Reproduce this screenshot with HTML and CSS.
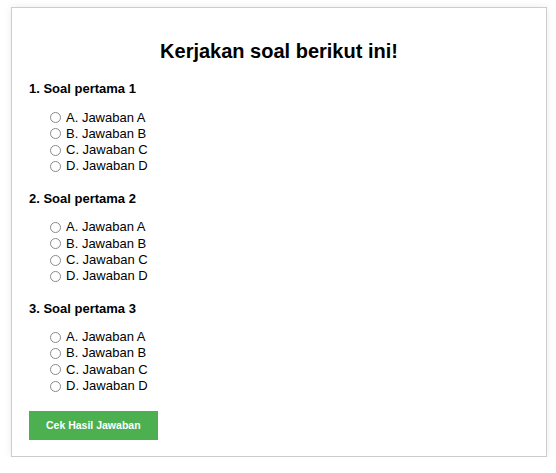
FILE: index.html
```html
<!DOCTYPE html>
<html lang="id">
<head>
<meta charset="utf-8">
<title>Kuis</title>
<link rel="stylesheet" href="styles.css">
</head>
<body>
<div class="quiz">
  <h1 class="quiz-title">Kerjakan soal berikut ini!</h1>
  <form class="quiz-form">
    <div class="question">
      <p class="question-title">1. Soal pertama 1</p>
      <div class="options">
        <label class="option"><input type="radio" name="q1" class="radio">A. Jawaban A</label>
        <label class="option"><input type="radio" name="q1" class="radio">B. Jawaban B</label>
        <label class="option"><input type="radio" name="q1" class="radio">C. Jawaban C</label>
        <label class="option"><input type="radio" name="q1" class="radio">D. Jawaban D</label>
      </div>
    </div>
    <div class="question">
      <p class="question-title">2. Soal pertama 2</p>
      <div class="options">
        <label class="option"><input type="radio" name="q2" class="radio">A. Jawaban A</label>
        <label class="option"><input type="radio" name="q2" class="radio">B. Jawaban B</label>
        <label class="option"><input type="radio" name="q2" class="radio">C. Jawaban C</label>
        <label class="option"><input type="radio" name="q2" class="radio">D. Jawaban D</label>
      </div>
    </div>
    <div class="question">
      <p class="question-title">3. Soal pertama 3</p>
      <div class="options">
        <label class="option"><input type="radio" name="q3" class="radio">A. Jawaban A</label>
        <label class="option"><input type="radio" name="q3" class="radio">B. Jawaban B</label>
        <label class="option"><input type="radio" name="q3" class="radio">C. Jawaban C</label>
        <label class="option"><input type="radio" name="q3" class="radio">D. Jawaban D</label>
      </div>
    </div>
    <button type="button" class="submit-btn">Cek Hasil Jawaban</button>
  </form>
</div>
</body>
</html>
```

FILE: styles.css
```css
html, body {
  margin: 0;
  background: #ffffff;
}

body {
  padding: 7px 9px 0 11px;
  font-family: "Liberation Sans", Arial, sans-serif;
  color: #000;
}

.quiz {
  background: #fff;
  border: 1px solid #cccccc;
  box-shadow: 0 0 8px rgba(0, 0, 0, 0.08);
  padding: 32px 17px 16px;
}

.quiz-title {
  margin: 0 0 18px;
  font-size: 20px;
  line-height: 23px;
  font-weight: bold;
  text-align: center;
}

.quiz-form {
  margin: 0;
}

.question {
  margin-bottom: 16px;
}

.question-title {
  margin: 0 0 13.5px;
  font-size: 13px;
  line-height: 15px;
  font-weight: bold;
}

.options {
  padding-left: 21px;
}

.option {
  display: flex;
  align-items: center;
  height: 16.33px;
  font-size: 13px;
  line-height: 16.33px;
}

.radio {
  appearance: none;
  -webkit-appearance: none;
  box-sizing: border-box;
  width: 11px;
  height: 11px;
  margin: 0 5px 0 0;
  border: 1px solid #8a8a8a;
  border-radius: 50%;
  background: #fff;
  flex: none;
}

.submit-btn {
  display: block;
  margin-top: 17px;
  padding: 8px 17px;
  border: none;
  background: #4caf50;
  color: #fff;
  font-family: "Liberation Sans", Arial, sans-serif;
  font-size: 10.5px;
  line-height: 13px;
  font-weight: bold;
  cursor: pointer;
}
```
